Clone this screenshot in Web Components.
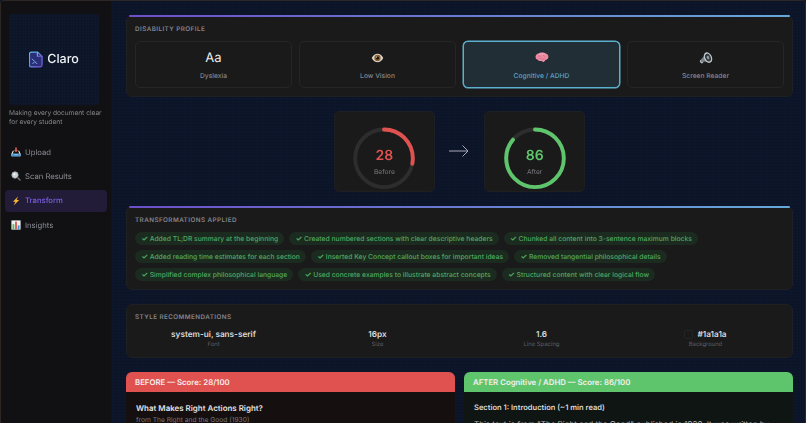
<!DOCTYPE html>
<html lang="en"><head><meta charset="utf-8"><title>Claro</title>
<style>
html,body{margin:0;height:423px;overflow:hidden;background:#0c1529;font-family:Inter,"Liberation Sans",sans-serif;text-rendering:geometricPrecision}
</style></head><body>
<claro-app></claro-app>
<script>
const ICONS={
tray:`<svg viewBox="0 0 12 12" width="10" height="10"><path d="M5 .5h2v3h1.600L6 6.400 3.400 3.500H5z" fill="#d8604f"/><path d="M2.200 4.500h1.300L2 8h8L8.500 4.500h1.300L11.500 8v3.200H.5V8z" fill="#e8edf2"/><path d="M.5 8H4l.6 1h2.800l.6-1h3.500v3.200H.5z" fill="#4a9bdc"/></svg>`,
lens:`<svg viewBox="0 0 12 12" width="10" height="10"><circle cx="4.800" cy="4.800" r="3.800" fill="#c9d3da" stroke="#a3a8ac" stroke-width="1"/><circle cx="3.900" cy="3.900" r="1.400" fill="#eef3f6"/><path d="M7.800 7.800l3 3" stroke="#77706a" stroke-width="1.800" stroke-linecap="round"/></svg>`,
bolt:`<svg viewBox="0 0 12 12" width="10" height="10"><path d="M8.500.5 2.300 6.800h3L3.300 11.500 9.800 4.900H6.700z" fill="#f5b92e"/></svg>`,
chart:`<svg viewBox="0 0 12 12" width="10" height="10"><rect x=".5" y=".5" width="11" height="11" fill="#eef0f2"/><rect x="1.800" y="5" width="2.200" height="6" fill="#5fb95c"/><rect x="4.900" y="2" width="2.200" height="9" fill="#e0574f"/><rect x="8" y="6.500" width="2.200" height="4.500" fill="#3f8fdc"/></svg>`,
eye:`<svg viewBox="0 0 14 10" width="13" height="10"><path d="M.8 5C2.500 1.500 4.600.4 7 .4s4.500 1.100 6.200 4.600C11.500 8.500 9.400 9.600 7 9.600S2.500 8.500.8 5z" fill="#dcd5c9"/><circle cx="7" cy="5" r="3.400" fill="#8a5f33"/><circle cx="7" cy="5" r="1.700" fill="#1c1410"/><circle cx="6" cy="4" r=".6" fill="#efe9df"/></svg>`,
brain:`<svg viewBox="0 0 14 12" width="14" height="12"><path d="M3.600 1.500C5 .3 9 .2 10.700 1.400c1.900.4 2.900 1.900 2.700 3.600-.2 1.700-1.400 2.800-3 2.900-.5 1.100-1.100 1.700-1.900 2-.8.200-1.300-.2-1.500-.9H5.200C3.800 9 2.900 8.300 2.500 7.500 1 7.200.3 5.900.6 4.400c.2-1.500 1.400-2.700 3-2.900z" fill="#ea8ba2"/><path d="M2.500 2.800c2-1.500 6.500-1.700 9-.4-2.300-.3-6.500-.4-9 .4z" fill="#f6b4c3"/><path d="M3 4.700c1-1 2.200-1 3 0M8 3.300c1 .1 1.800.6 2.300 1.600M4 6.800c1-.6 2-.6 3 0 1 .5 1.900.4 3-.3" stroke="#c9637f" stroke-width=".6" fill="none"/></svg>`,
speaker:`<svg viewBox="0 0 14 14" width="14" height="14"><path d="M8 1.500 2.200 8.200l-.9 1.100c-.6.9-.3 2 .5 2.500.8.600 1.800.5 2.400-.3l.8-1.100 6 1z" fill="#79848a"/><ellipse cx="9" cy="6.600" rx="3.900" ry="5.500" transform="rotate(-25 9 6.600)" fill="#c3ccd1"/><ellipse cx="9" cy="6.600" rx="2.700" ry="4.100" transform="rotate(-25 9 6.600)" fill="#343a3e"/><ellipse cx="9" cy="6.600" rx="1.200" ry="1.900" transform="rotate(-25 9 6.600)" fill="#8f999e"/><path d="M1.700 9.200c-.6.800-.4 1.700.2 2.200.7.600 1.500.5 2.100-.1" stroke="#e4e8ea" stroke-width=".8" fill="none"/></svg>`
};
function def(name,css,html){
  customElements.define(name,class extends HTMLElement{
    connectedCallback(){
      if(this.shadowRoot)return;
      const s=this.attachShadow({mode:'open'});
      s.innerHTML=`<style>${css}</style>`+(typeof html==='function'?html(this):html);
    }
  });
}
const GRID=a=>`background-image:linear-gradient(rgba(0,0,0,${a}) 1px,transparent 1px),linear-gradient(90deg,rgba(0,0,0,${a}) 1px,transparent 1px);background-size:3px 3px`;
def('claro-logo',`:host{display:flex;align-items:center;justify-content:center;gap:4px;width:90px;height:91px;border-radius:3px;color:#eef1f6;font-size:12.500px;font-weight:500;background-color:#0e182d;${GRID(.1)}}
 svg{display:block}`,
 `<svg width="14" height="17" viewBox="0 0 15 18"><defs><linearGradient id="g" x1="0" y1="0" x2="1" y2="1"><stop offset="0" stop-color="#5cc1e6"/><stop offset="1" stop-color="#7a4fe0"/></linearGradient></defs><path d="M2.500 1h6.800L14 5.700V15a2 2 0 0 1-2 2H2.500a2 2 0 0 1-2-2V3a2 2 0 0 1 2-2z" fill="#2a2f78" stroke="url(#g)" stroke-width="1.300"/><path d="M9 1v4.500h5" fill="none" stroke="url(#g)" stroke-width="1.300"/><path d="M3.500 8.500l2 2M6.500 11.500l2 2M4 13.500l2-2" stroke="#7fb8ee" stroke-width="1" stroke-linecap="round"/></svg><span>Claro</span>`);
def('nav-item',`:host{display:flex;align-items:center;gap:4px;height:22px;padding:0 6px;margin:0 4px 0 4px;border-radius:4px;color:#8d8f96;font-size:7.700px}
 :host([active]){background:#231c38;color:#7c5fe0;font-weight:500}
 .i{width:10px;height:10px;flex:none}svg{display:block}`,
 h=>`<span class="i">${ICONS[h.getAttribute('icon')]}</span><slot></slot>`);
def('claro-sidebar',`:host{display:block;background:#111113;box-sizing:border-box;padding-top:13px;height:422px}
 .logo{padding-left:8px}
 p{margin:3.500px 0 14px 8px;font-size:6.600px;line-height:9.300px;color:#85868c;width:97px}
 nav{display:flex;flex-direction:column;gap:2.400px}`,
 `<div class="logo"><claro-logo></claro-logo></div><p>Making every document clear for every student</p><nav><nav-item icon="tray">Upload</nav-item><nav-item icon="lens">Scan Results</nav-item><nav-item icon="bolt" active>Transform</nav-item><nav-item icon="chart">Insights</nav-item></nav>`);
def('claro-panel',`:host{display:block;position:relative;background:#1a1a1a;border-radius:6px;padding:9px 8px 8px;border:1px solid #1f2023;box-sizing:border-box}
 :host([accent])::before{content:"";position:absolute;left:2px;right:2px;top:-1px;height:1.500px;background:linear-gradient(90deg,#6d4fc9,#66a8da);border-radius:1px}
 :host([tight]){padding-top:8px}
 h2{margin:0 0 7px;font-size:6.300px;line-height:9px;letter-spacing:.44px;font-weight:600;color:#85868f;text-transform:uppercase}`,
 h=>`<h2>${h.getAttribute('title')}</h2><slot></slot>`);
def('profile-card',`:host{display:flex;flex-direction:column;align-items:center;flex:1 1 0;height:47px;box-sizing:border-box;border:1px solid #262628;border-radius:5px;background:#1a1a1a;color:#85868c;font-size:6.700px;font-weight:500;padding-top:7.500px}
 :host([active]){border:1px solid #5cb0cf;box-shadow:0 0 0 .5px #5cb0cf;background:#222e36;color:#5ba4c4}
 .g{height:16px;display:flex;align-items:center;margin-bottom:6px;color:#eee;font-size:13px;font-weight:400}svg{display:block}`,
 h=>`<div class="g">${h.hasAttribute('icon')?ICONS[h.getAttribute('icon')]:'Aa'}</div><slot></slot>`);
def('score-card',`:host{display:flex;flex-direction:column;align-items:center;width:100.500px;height:80.500px;padding-top:14px;background:#1a1a1a;border-radius:5px;border:1px solid #1e1f22;box-sizing:border-box;position:relative}
 svg{display:block}
 .c{position:absolute;left:0;right:0;top:35px;text-align:center}
 b{display:block;font-size:14px;line-height:17px;font-weight:600}
 span{display:block;font-size:6.700px;line-height:9px;margin-top:4px;color:#77787e}`,
 h=>{const v=+h.getAttribute('value'),col=h.getAttribute('color'),C=2*Math.PI*29.500;
 return `<svg width="66" height="66" viewBox="0 0 66 66"><circle cx="33" cy="33" r="29.500" fill="none" stroke="#2d2d2d" stroke-width="4"/><circle cx="33" cy="33" r="29.500" fill="none" stroke="${col}" stroke-width="4" stroke-linecap="round" stroke-dasharray="${C*v/100} ${C}" transform="rotate(-90 33 33)"/></svg><div class="c"><b style="color:${col}">${v}</b><span>${h.getAttribute('label')}</span></div>`});
def('score-row',`:host{display:flex;align-items:center;justify-content:center;gap:12.400px;margin:14px 0 14.500px}
 svg{display:block}`,
 `<score-card value="28" color="#e0524f" label="Before"></score-card><svg width="25" height="14" viewBox="0 0 25 14"><path d="M2 7H21M15.500 1.500 21 7l-5.500 5.500" fill="none" stroke="#a9a9b8" stroke-width="1"/></svg><score-card value="86" color="#5fc56c" label="After"></score-card>`);
def('t-chip',`:host{display:inline-block;height:13px;line-height:13px;padding:0 6.200px;border-radius:7px;background:#1c2b20;color:#4fa85f;font-size:6.750px;font-weight:500;white-space:nowrap}
 span{font-size:7.600px;font-weight:700}`,`<span>✓</span> <slot></slot>`);
def('chip-list',`:host{display:flex;flex-wrap:wrap;gap:5px 5px}`,`<slot></slot>`);
def('style-item',`:host{display:block;flex:1 1 0;text-align:center}
 b{display:flex;justify-content:center;align-items:center;gap:4px;font-size:8.200px;line-height:10px;font-weight:600;color:#dcdcdc}
 span{display:block;font-size:5.900px;line-height:8px;margin-top:2px;color:#5c5d62}
 i{display:inline-block;width:9px;height:9px;box-sizing:border-box;border-radius:2px;background:#1a1a1a;border:1px solid #242426}`,
 h=>`<b>${h.hasAttribute('swatch')?'<i></i>':''}<slot></slot></b><span>${h.getAttribute('label')}</span>`);
def('style-grid',`:host{display:flex;gap:7px}`,`<slot></slot>`);
def('doc-pane',`:host{display:block;flex:1 1 0;min-width:0;border-radius:6px 6px 0 0;overflow:hidden}
 header{height:20px;line-height:20px;padding:0 9px;font-size:7.800px;font-weight:600;color:#f6eeee;background:var(--c)}
 .b{background:var(--bg);padding:10px 10px 0;height:50px;box-sizing:border-box;color:#e2e2e2}`,
 h=>`<header>${h.getAttribute('title')}</header><div class="b"><slot></slot></div>`);
def('doc-row',`:host{display:flex;gap:9px;margin-top:14px}`,`<slot></slot>`);
def('claro-main',`:host{display:block;height:422px;overflow:hidden;padding:14px 12px 0 15px;box-sizing:border-box;min-width:0;background-color:#0d162a;${GRID(.05)}}`,
 `<claro-panel title="Disability profile" accent>
   <div style="display:flex;gap:7px"><profile-card>Dyslexia</profile-card><profile-card icon="eye">Low Vision</profile-card><profile-card icon="brain" active>Cognitive / ADHD</profile-card><profile-card icon="speaker">Screen Reader</profile-card></div>
  </claro-panel>
  <score-row></score-row>
  <claro-panel title="Transformations applied" accent><chip-list>
   <t-chip>Added TL;DR summary at the beginning</t-chip><t-chip>Created numbered sections with clear descriptive headers</t-chip><t-chip>Chunked all content into 3-sentence maximum blocks</t-chip>
   <t-chip>Added reading time estimates for each section</t-chip><t-chip>Inserted Key Concept callout boxes for important ideas</t-chip><t-chip>Removed tangential philosophical details</t-chip>
   <t-chip>Simplified complex philosophical language</t-chip><t-chip>Used concrete examples to illustrate abstract concepts</t-chip><t-chip>Structured content with clear logical flow</t-chip>
  </chip-list></claro-panel>
  <claro-panel title="Style recommendations" tight style="margin-top:14px"><style-grid>
   <style-item label="Font">system-ui, sans-serif</style-item><style-item label="Size">16px</style-item><style-item label="Line Spacing">1.6</style-item><style-item label="Background" swatch>#1a1a1a</style-item>
  </style-grid></claro-panel>
  <doc-row>
   <doc-pane title="BEFORE — Score: 28/100" style="--c:#e0524f;--bg:#150f10"><div style="font-size:7.950px;line-height:10px;font-weight:600;margin-top:1px">What Makes Right Actions Right?</div><div style="font-size:6.700px;line-height:9px;margin-top:2.500px;color:#77787e">from The Right and the Good (1930)</div></doc-pane>
   <doc-pane title="AFTER Cognitive / ADHD — Score: 86/100" style="--c:#5fc56c;--bg:#0f1513"><div style="font-size:7.550px;line-height:10px;font-weight:600;color:#d8d8d8;margin-top:1px">Section 1: Introduction (~1 min read)</div><div style="font-size:8px;line-height:10px;margin-top:5.500px;color:#b8b8b8;white-space:nowrap">This text is from "The Right and the Good" published in 1930. It was written by</div></doc-pane>
  </doc-row>`);
def('claro-app',`:host{display:grid;grid-template-columns:110px 1fr;width:806px;height:423px;border:1px solid #2c2725;border-bottom:0;border-radius:4px 4px 0 0;box-sizing:border-box;overflow:hidden;filter:blur(.25px)}`,
 `<claro-sidebar></claro-sidebar><claro-main></claro-main>`);
</script></body></html>
